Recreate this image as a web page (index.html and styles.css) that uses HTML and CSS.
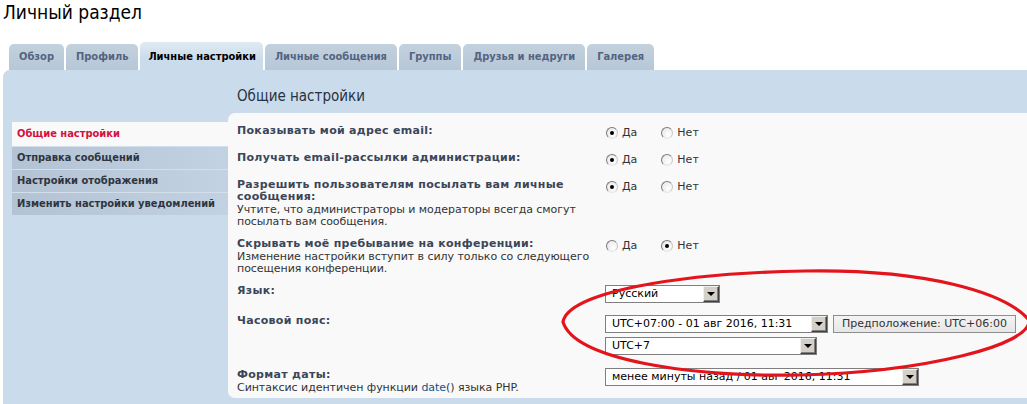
FILE: index.html
```html
<!DOCTYPE html>
<html lang="ru">
<head>
<meta charset="utf-8">
<title>Личный раздел</title>
<link rel="stylesheet" href="styles.css">
</head>
<body>
<h1 class="page-title">Личный раздел</h1>
<ul class="tabs">
  <li class="tab">Обзор</li>
  <li class="tab">Профиль</li>
  <li class="tab tab-active">Личные настройки</li>
  <li class="tab">Личные сообщения</li>
  <li class="tab">Группы</li>
  <li class="tab">Друзья и недруги</li>
  <li class="tab">Галерея</li>
</ul>
<div class="panel">
  <ul class="menu">
    <li class="menu-item menu-active">Общие настройки</li>
    <li class="menu-item">Отправка сообщений</li>
    <li class="menu-item">Настройки отображения</li>
    <li class="menu-item">Изменить настройки уведомлений</li>
  </ul>
  <div class="main">
    <h2 class="main-title">Общие настройки</h2>
    <div class="content">
      <div class="row">
        <div class="row-label"><div class="label">Показывать мой адрес email:</div></div>
        <div class="row-field">
          <div class="radios">
            <span class="radio radio-on"></span><span class="radio-text">Да</span>
            <span class="radio"></span><span class="radio-text">Нет</span>
          </div>
        </div>
      </div>
      <div class="row">
        <div class="row-label"><div class="label">Получать email-рассылки администрации:</div></div>
        <div class="row-field">
          <div class="radios">
            <span class="radio radio-on"></span><span class="radio-text">Да</span>
            <span class="radio"></span><span class="radio-text">Нет</span>
          </div>
        </div>
      </div>
      <div class="row">
        <div class="row-label">
          <div class="label">Разрешить пользователям посылать вам личные<br>сообщения:</div>
          <div class="desc">Учтите, что администраторы и модераторы всегда смогут<br>посылать вам сообщения.</div>
        </div>
        <div class="row-field">
          <div class="radios">
            <span class="radio radio-on"></span><span class="radio-text">Да</span>
            <span class="radio"></span><span class="radio-text">Нет</span>
          </div>
        </div>
      </div>
      <div class="row">
        <div class="row-label">
          <div class="label">Скрывать моё пребывание на конференции:</div>
          <div class="desc">Изменение настройки вступит в силу только со следующего<br>посещения конференции.</div>
        </div>
        <div class="row-field">
          <div class="radios">
            <span class="radio"></span><span class="radio-text">Да</span>
            <span class="radio radio-on"></span><span class="radio-text">Нет</span>
          </div>
        </div>
      </div>
      <div class="row">
        <div class="row-label"><div class="label">Язык:</div></div>
        <div class="row-field">
          <div class="select-line">
            <div class="select select-lang"><span class="select-text">Русский</span><span class="select-arrow"></span></div>
          </div>
        </div>
      </div>
      <div class="row row-tz">
        <div class="row-label"><div class="label">Часовой пояс:</div></div>
        <div class="row-field">
          <div class="select-line">
            <div class="select select-tz"><span class="select-text">UTC+07:00 - 01 авг 2016, 11:31</span><span class="select-arrow"></span></div>
            <div class="button">Предположение: UTC+06:00</div>
          </div>
          <div class="select-line select-line-second">
            <div class="select select-utc"><span class="select-text">UTC+7</span><span class="select-arrow"></span></div>
          </div>
        </div>
      </div>
      <div class="row row-last">
        <div class="row-label">
          <div class="label">Формат даты:</div>
          <div class="desc">Синтаксис идентичен функции <span class="link">date</span>() языка PHP.</div>
        </div>
        <div class="row-field">
          <div class="select-line select-line-date">
            <div class="select select-date"><span class="select-text">менее минуты назад / 01 авг 2016, 11:31</span><span class="select-arrow"></span></div>
          </div>
        </div>
      </div>
    </div>
  </div>
</div>
<svg class="annotation" width="1027" height="404" viewBox="0 0 1027 404" xmlns="http://www.w3.org/2000/svg">
  <path d="M 563 322 C 568 292, 680 273, 805 271 C 925 269, 1005 292, 1029 320 C 1032 345, 925 372, 800 375 C 690 377, 575 360, 563 322 Z" fill="none" stroke="#e3141c" stroke-width="3.2"/>
</svg>
</body>
</html>
```
FILE: styles.css
```css
html, body {
  margin: 0;
  padding: 0;
}
body {
  position: relative;
  width: 1027px;
  height: 404px;
  overflow: hidden;
  background: #ffffff;
  font-family: "DejaVu Sans", Verdana, sans-serif;
  font-size: 11px;
  color: #333333;
}
.page-title {
  margin: 0;
  padding: 1px 0 0 3px;
  height: 23px;
  box-sizing: border-box;
  font-family: "DejaVu Sans Condensed", "DejaVu Sans", sans-serif;
  font-stretch: condensed;
  font-size: 19px;
  line-height: 22px;
  font-weight: normal;
  color: #000000;
}
.tabs {
  display: flex;
  align-items: flex-end;
  gap: 2px;
  list-style: none;
  margin: 19px 0 0 9px;
  padding: 0;
  height: 28px;
}
.tab {
  height: 26px;
  line-height: 26px;
  padding: 0 10px;
  background: linear-gradient(#c3d1de, #b7c7d6);
  color: #536482;
  font-family: "DejaVu Sans Condensed", "DejaVu Sans", sans-serif;
  font-stretch: condensed;
  font-weight: bold;
  border-radius: 5px 5px 0 0;
  white-space: nowrap;
}
.tab-active {
  height: 28px;
  line-height: 29px;
  padding: 0 7px 0 8px;
  background: linear-gradient(#e1eaf3, #cadceb 60%);
  color: #000000;
}
.panel {
  display: flex;
  margin-left: 3px;
  height: 334px;
  background: #cadceb;
  border-radius: 7px 0 0 0;
}
.menu {
  width: 216px;
  flex: none;
  margin: 52px 0 0 9px;
  padding: 0;
  list-style: none;
}
.menu-item {
  box-sizing: border-box;
  height: 23px;
  line-height: 22px;
  padding-left: 5px;
  border-top: 1px solid #d3dfea;
  background: linear-gradient(to right, #b3c3d3, #c2d2e2);
  font-family: "DejaVu Sans Condensed", "DejaVu Sans", sans-serif;
  font-stretch: condensed;
  font-weight: bold;
  color: #2f3540;
  white-space: nowrap;
}
.menu-active {
  height: 24px;
  line-height: 24px;
  border-top: 0;
  background: #f9f9f9;
  color: #d31141;
}
.main {
  flex: 1;
  display: flex;
  flex-direction: column;
  min-width: 0;
}
.main-title {
  box-sizing: border-box;
  height: 43px;
  margin: 0;
  padding: 16px 0 0 9px;
  font-family: "DejaVu Sans Condensed", "DejaVu Sans", sans-serif;
  font-stretch: condensed;
  font-size: 15px;
  line-height: 20px;
  font-weight: normal;
  color: #28313f;
}
.content {
  box-sizing: border-box;
  height: 285px;
  padding: 10px 0 0 9px;
  background: #f9f9f9;
  border-radius: 7px 0 0 7px;
}
.row {
  display: flex;
  align-items: flex-start;
  margin-bottom: 8px;
}
.row-tz {
  margin-bottom: 10px;
}
.row-label {
  width: 368px;
  flex: none;
  padding-top: 2px;
  line-height: 12px;
}
.label {
  font-weight: bold;
  letter-spacing: 0.3px;
  color: #3b4658;
}
.desc {
  margin-top: 1px;
  letter-spacing: -0.05px;
  color: #333333;
}
.link {
  color: #105289;
}
.row-field {
  flex: 1;
}
.radios {
  display: flex;
  align-items: center;
  height: 19px;
}
.radio {
  position: relative;
  box-sizing: border-box;
  width: 12px;
  height: 12px;
  margin-left: 1px;
  border-radius: 50%;
  border: 1px solid;
  border-color: #7a7a7a #c8c8c8 #e6e6e6 #7a7a7a;
  background: radial-gradient(circle at 65% 65%, #ffffff, #e4e4e4);
}
.radio-on::after {
  content: "";
  position: absolute;
  left: 3px;
  top: 3px;
  width: 4px;
  height: 4px;
  border-radius: 50%;
  background: #000000;
}
.radio-text {
  margin-left: 4px;
  margin-right: 23px;
  color: #333333;
}
.select-line {
  display: flex;
  gap: 5px;
  margin: 2px 0;
}
.select-line-second {
  margin-top: 4px;
}
.select-line-date {
  margin-top: 1px;
}
.select {
  display: flex;
  box-sizing: border-box;
  height: 18px;
  border: 1px solid #7f7f7f;
  background: #ffffff;
}
.select-text {
  flex: 1;
  padding-left: 6px;
  line-height: 16px;
  color: #000000;
  white-space: nowrap;
  overflow: hidden;
}
.select-arrow {
  position: relative;
  box-sizing: border-box;
  width: 16px;
  height: 16px;
  background: #d4d0c8;
  border: 1px solid;
  border-color: #f2f0ec #404040 #404040 #f2f0ec;
  box-shadow: inset -1px -1px 0 #808080;
}
.select-arrow::after {
  content: "";
  position: absolute;
  left: 3px;
  top: 5px;
  border-left: 4px solid transparent;
  border-right: 4px solid transparent;
  border-top: 4px solid #000000;
}
.select-lang { width: 115px; }
.select-tz { width: 223px; }
.select-utc { width: 212px; }
.select-date { width: 314px; }
.button {
  box-sizing: border-box;
  width: 183px;
  height: 18px;
  line-height: 16px;
  text-align: center;
  border: 1px solid #8e8e8e;
  background: linear-gradient(#f4f4f4, #e6e6e6);
  color: #333333;
  white-space: nowrap;
}
.annotation {
  position: absolute;
  left: 0;
  top: 0;
  pointer-events: none;
}
```
